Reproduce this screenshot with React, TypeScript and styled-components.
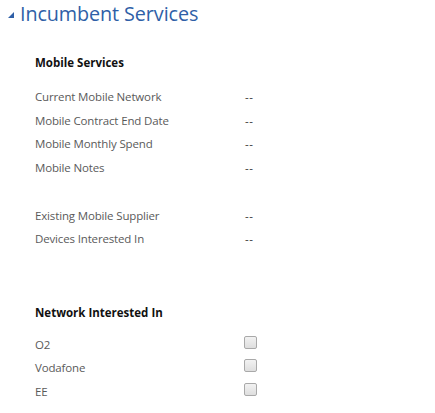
import React from "react";
import styled, { createGlobalStyle } from "styled-components";

const Global = createGlobalStyle`
  html, body { margin: 0; padding: 0; background: #fff; }
  body { font-family: "Open Sans", "Noto Sans", sans-serif; }
`;

const Page = styled.div`
  width: 435px;
  height: 413px;
  overflow: hidden;
`;

const Header = styled.div`
  display: flex;
  align-items: center;
  height: 28px;
  padding-left: 8px;
  gap: 6px;
`;

const Caret = styled.span`
  width: 0;
  height: 0;
  border-left: 6px solid transparent;
  border-bottom: 6px solid #2f5fa7;
  margin-top: 2px;
`;

const Title = styled.h1`
  margin: 0;
  font-family: "Open Sans", sans-serif;
  font-weight: 400;
  font-size: 19.8px;
  color: #2f5fa7;
  letter-spacing: -0.1px;
  line-height: 28px;
`;

const Section = styled.section<{ $top: number }>`
  padding-left: 35px;
  margin-top: ${(p) => p.$top}px;
`;

const Heading = styled.h2<{ $gap: number }>`
  margin: 0 0 ${(p) => p.$gap}px 0;
  font-size: 11.5px;
  font-weight: 700;
  color: #111;
  height: 18px;
  line-height: 18px;
`;

const Row = styled.div`
  display: grid;
  grid-template-columns: 210px 1fr;
  height: 23.6px;
  align-items: center;
  font-size: 11.5px;
  color: #5a5a5a;
`;

const Label = styled.span`
  white-space: nowrap;
  letter-spacing: -0.15px;
`;

const Value = styled.span`
  color: #333;
  letter-spacing: 0.5px;
`;

const Spacer = styled.div<{ $h: number }>`
  height: ${(p) => p.$h}px;
`;

const Box = styled.span<{ $up: number }>`
  width: 11px;
  height: 11px;
  border: 1px solid #a9a9a9;
  border-radius: 2px;
  background: linear-gradient(#f2f2f2, #dedede);
  display: inline-block;
  margin-top: -${(p) => p.$up}px;
  margin-left: -1px;
`;

const mobile = [
  "Current Mobile Network",
  "Mobile Contract End Date",
  "Mobile Monthly Spend",
  "Mobile Notes",
];
const other = ["Existing Mobile Supplier", "Devices Interested In"];
const networks = ["O2", "Vodafone", "EE"];

export default function App() {
  return (
    <Page>
      <Global />
      <Header>
        <Caret />
        <Title>Incumbent Services</Title>
      </Header>
      <Section $top={26}>
        <Heading $gap={13}>Mobile Services</Heading>
        {mobile.map((m) => (
          <Row key={m}>
            <Label>{m}</Label>
            <Value>--</Value>
          </Row>
        ))}
        <Spacer $h={24} />
        {other.map((m) => (
          <Row key={m}>
            <Label>{m}</Label>
            <Value>--</Value>
          </Row>
        ))}
      </Section>
      <Section $top={53}>
        <Heading $gap={11}>Network Interested In</Heading>
        {networks.map((n) => (
          <Row key={n}>
            <Label>{n}</Label>
            <span>
              <Box $up={14} />
            </span>
          </Row>
        ))}
      </Section>
    </Page>
  );
}
